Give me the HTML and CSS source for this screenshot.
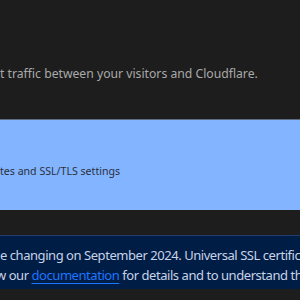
FILE: index.html
```html
<!DOCTYPE html>
<html lang="en">

<head>
    <meta charset="UTF-8">
    <meta name="viewport" content="width=device-width, initial-scale=1.0">
    <title>Edge Certificates</title>
    <link rel="stylesheet" href="styles.css">
</head>

<body>
    <div class="page">
        <section class="intro">
            <p class="intro-text">t traffic between your visitors and Cloudflare.</p>
        </section>
        <section class="panel">
            <p class="panel-text">tes and SSL/TLS settings</p>
        </section>
        <div class="notice">
            <p>e changing on September 2024. Universal SSL certificates will be</p>
            <p class="notice-more">w our <a href="#">documentation</a> for details and to understand the changes.</p>
        </div>
    </div>
</body>

</html>
```

FILE: styles.css
```css
body {
    margin: 0;
    background-color: #1d1d1d;
    font-family: "Noto Sans", "Open Sans", sans-serif;
    overflow: hidden;
}

.page {
    width: 300px;
    height: 300px;
    overflow: hidden;
}

.intro {
    padding-top: 64px;
    height: 55px;
}

.intro-text {
    margin: 0;
    font-size: 12.2px;
    line-height: 20px;
    color: #a9a9a9;
    white-space: nowrap;
}

.panel {
    height: 90px;
    border-top: 1px solid #5d6c82;
    background-color: #82b4ff;
    display: flex;
    align-items: center;
}

.panel-text {
    margin: 0;
    padding-top: 11px;
    font-size: 10.6px;
    line-height: 20px;
    color: #2b303c;
    white-space: nowrap;
}

.notice {
    margin-top: 25px;
    border-top: 1px solid #1f3d6c;
    background-color: #001d45;
    padding: 9px 0 4px 0;
    overflow: hidden;
}

.notice p {
    margin: 0;
    font-size: 13px;
    line-height: 20px;
    color: #c8d3e8;
    white-space: nowrap;
    letter-spacing: -0.45px;
}

.notice .notice-more {
    text-indent: -4px;
}

.notice a {
    color: #1f75ff;
    text-decoration: underline;
    text-underline-offset: 3px;
}
```
